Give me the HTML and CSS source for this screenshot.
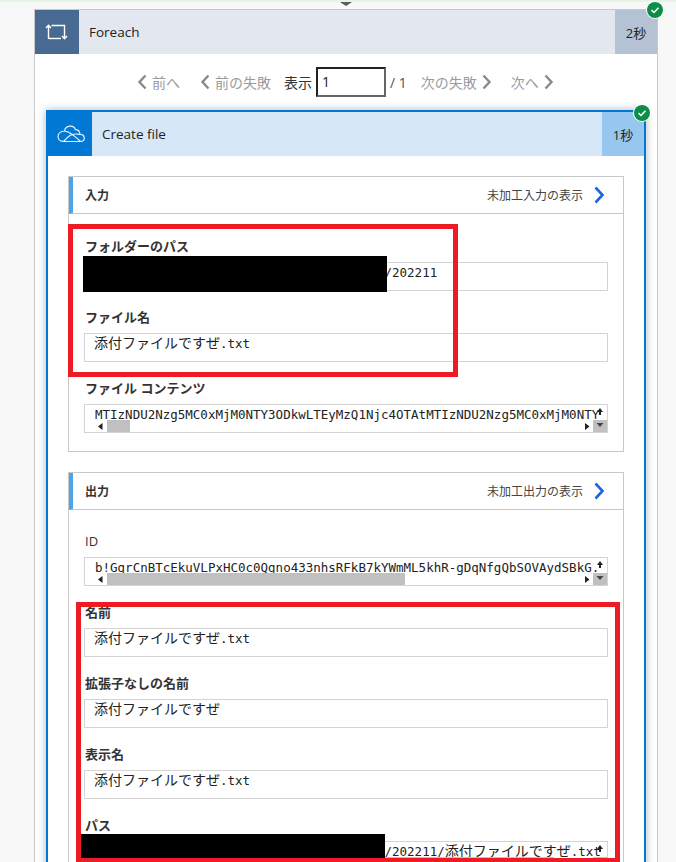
FILE: index.html
```html
<!DOCTYPE html>
<html lang="ja">
<head>
<meta charset="utf-8">
<title>Foreach</title>
<link rel="stylesheet" href="styles.css">
</head>
<body>
<div class="strip"></div>
<svg class="flow-arrow" width="14" height="5" viewBox="0 0 14 5"><path d="M1 0 L7 4 L13 0 L9 0 L7 1.4 L5 0 Z" fill="#555"/><path d="M5 0 L7 2 L9 0 Z" fill="#555"/></svg>
<main class="card loop">
  <header class="head loop-head">
    <div class="ico loop-ico">
      <svg width="24" height="18" viewBox="0 0 24 18" fill="none" stroke="#fff" stroke-width="1.4"><path d="M3.5 16V2.5M1 5L3.5 2.2L6 5"/><path d="M6.5 2.5H19.5V15.5M17 13L19.5 15.8L22 13"/><path d="M3.5 15.5H16"/></svg>
    </div>
    <div class="title">Foreach</div>
    <div class="time loop-time">2秒</div>
    <svg class="badge badge-outer" width="18" height="18" viewBox="0 0 18 18"><circle cx="9" cy="9" r="9" fill="#fff"/><circle cx="9" cy="9" r="8" fill="#0a8f46"/><path d="M5.5 9.2L8 11.5L12.5 6.8" fill="none" stroke="#fff" stroke-width="1.6"/></svg>
  </header>
  <nav class="pager">
    <svg class="chev" width="10" height="16" viewBox="0 0 10 16"><path d="M8.5 1.5L2.5 8L8.5 14.5"/></svg>
    <span class="muted gap-s">前へ</span>
    <svg class="chev gap-l" width="10" height="16" viewBox="0 0 10 16"><path d="M8.5 1.5L2.5 8L8.5 14.5"/></svg>
    <span class="muted gap-s">前の失敗</span>
    <span class="show">表示</span>
    <div class="page-input">1</div>
    <span class="total">/ 1</span>
    <span class="muted next-fail">次の失敗</span>
    <svg class="chev gap-s" width="10" height="16" viewBox="0 0 10 16"><path d="M1.5 1.5L7.5 8L1.5 14.5"/></svg>
    <span class="muted gap-next">次へ</span>
    <svg class="chev gap-s" width="10" height="16" viewBox="0 0 10 16"><path d="M1.5 1.5L7.5 8L1.5 14.5"/></svg>
  </nav>
  <section class="card action">
    <header class="head action-head">
      <div class="ico action-ico">
        <svg width="28" height="18" viewBox="0 0 28 18" fill="none" stroke="#e8f3fc" stroke-width="1.2"><path d="M6.5 16.5H23.5C26.5 16.5 27.5 14.5 27.2 12.6C26.9 10.6 25.3 9.3 23 9.4C22.6 6 20.5 4.6 18.5 4.7C17.8 2.5 15.5 1 12.8 1.2C10 1.4 8 3.3 7.5 6C3.8 6.3 1 8.6 1 11.6C1 14.5 3.5 16.5 6.5 16.5Z"/><path d="M7.5 6C11 6.3 13.5 8 16 10C18 11.6 20.5 13.5 23.5 16.5M23 9.4C18 8.4 15.5 9 13 10.5C10.5 12 8.5 14.2 6.5 16.5"/></svg>
      </div>
      <div class="title">Create file</div>
      <div class="time action-time">1秒</div>
      <svg class="badge badge-inner" width="18" height="18" viewBox="0 0 18 18"><circle cx="9" cy="9" r="9" fill="#fff"/><circle cx="9" cy="9" r="8" fill="#0a8f46"/><path d="M5.5 9.2L8 11.5L12.5 6.8" fill="none" stroke="#fff" stroke-width="1.6"/></svg>
    </header>
    <div class="action-body">
      <section class="panel">
        <header class="panel-head">
          <span class="panel-title">入力</span>
          <span class="raw">未加工入力の表示</span>
          <svg class="blue-chev" width="12" height="18" viewBox="0 0 12 18"><path d="M2.5 1.5L9.5 9L2.5 16.5"/></svg>
        </header>
        <div class="panel-body">
          <div class="field">
            <div class="label">フォルダーのパス</div>
            <div class="box box-mono"><span class="redacted"></span><span class="mono">/202211</span></div>
          </div>
          <div class="field">
            <div class="label">ファイル名</div>
            <div class="box"><span class="jp">添付ファイルですぜ</span><span class="mono">.txt</span></div>
          </div>
          <div class="field">
            <div class="label">ファイル コンテンツ</div>
            <div class="box box-mono">
              <span class="mono">MTIzNDU2Nzg5MC0xMjM0NTY3ODkwLTEyMzQ1Njc4OTAtMTIzNDU2Nzg5MC0xMjM0NTY</span>
              <div class="vbar"><svg width="14" height="8" viewBox="0 0 14 8"><path d="M7 0L10 4H8V7H6V4H4Z" fill="#222"/></svg><div class="vthumb"><svg width="14" height="5" viewBox="0 0 14 5"><path d="M3.5 0H10.5L7 4Z" fill="#444"/></svg></div></div>
              <div class="hbar"><svg class="arr" width="5" height="7" viewBox="0 0 5 7"><path d="M4.5 0V7L0 3.5Z" fill="#222"/></svg><div class="track"><div class="thumb thumb-short"></div></div><svg class="arr" width="5" height="7" viewBox="0 0 5 7"><path d="M0 0V7L4.5 3.5Z" fill="#222"/></svg></div>
            </div>
          </div>
        </div>
      </section>
      <section class="panel panel-output">
        <header class="panel-head">
          <span class="panel-title">出力</span>
          <span class="raw">未加工出力の表示</span>
          <svg class="blue-chev" width="12" height="18" viewBox="0 0 12 18"><path d="M2.5 1.5L9.5 9L2.5 16.5"/></svg>
        </header>
        <div class="panel-body">
          <div class="field">
            <div class="label label-plain">ID</div>
            <div class="box box-mono">
              <span class="mono">b!GgrCnBTcEkuVLPxHC0c0Qgno433nhsRFkB7kYWmML5khR-gDqNfgQbSOVAydSBkG.</span>
              <div class="vbar"><svg width="14" height="8" viewBox="0 0 14 8"><path d="M7 0L10 4H8V7H6V4H4Z" fill="#222"/></svg><div class="vthumb"><svg width="14" height="5" viewBox="0 0 14 5"><path d="M3.5 0H10.5L7 4Z" fill="#444"/></svg></div></div>
              <div class="hbar"><svg class="arr" width="5" height="7" viewBox="0 0 5 7"><path d="M4.5 0V7L0 3.5Z" fill="#222"/></svg><div class="track"><div class="thumb thumb-long"></div></div><svg class="arr" width="5" height="7" viewBox="0 0 5 7"><path d="M0 0V7L4.5 3.5Z" fill="#222"/></svg></div>
            </div>
          </div>
          <div class="field">
            <div class="label">名前</div>
            <div class="box"><span class="jp">添付ファイルですぜ</span><span class="mono">.txt</span></div>
          </div>
          <div class="field">
            <div class="label">拡張子なしの名前</div>
            <div class="box"><span class="jp">添付ファイルですぜ</span></div>
          </div>
          <div class="field">
            <div class="label">表示名</div>
            <div class="box"><span class="jp">添付ファイルですぜ</span><span class="mono">.txt</span></div>
          </div>
          <div class="field">
            <div class="label">パス</div>
            <div class="box">
              <span class="redacted"></span><span class="mono">/202211/</span><span class="jp">添付ファイルですぜ</span><span class="mono">.txt</span>
              <div class="vbar"><svg width="14" height="8" viewBox="0 0 14 8"><path d="M7 0L10 4H8V7H6V4H4Z" fill="#222"/></svg><div class="vthumb"></div></div>
              <div class="hbar"><svg class="arr" width="5" height="7" viewBox="0 0 5 7"><path d="M4.5 0V7L0 3.5Z" fill="#222"/></svg><div class="track"><div class="thumb thumb-path"></div></div><svg class="arr" width="5" height="7" viewBox="0 0 5 7"><path d="M0 0V7L4.5 3.5Z" fill="#222"/></svg></div>
            </div>
          </div>
        </div>
      </section>
    </div>
  </section>
</main>
<div class="mask mask-a"></div>
<div class="mask mask-b"></div>
<div class="red red-a"></div>
<div class="red red-b"></div>
</body>
</html>
```
FILE: styles.css
```css
* { box-sizing: border-box; }
html, body { margin: 0; padding: 0; }
body {
  position: relative;
  width: 676px;
  height: 862px;
  overflow: hidden;
  background: #f8f8f8;
  font-family: "Open Sans", "Noto Sans CJK JP", sans-serif;
  color: #333;
  font-size: 14px;
}
.strip { height: 2px; background: #e6f4e6; }
.flow-arrow { position: absolute; left: 339px; top: 2px; }
.card { background: #fff; }
.loop {
  margin: 7px 18px 0 34px;
  border: 1px solid #c8c8c8;
  height: 860px;
}
.head { position: relative; display: flex; align-items: center; height: 44px; }
.loop-head { background: #e2e7f0; }
.action-head { background: #d6e8f7; }
.ico { display: flex; align-items: center; justify-content: center; height: 44px; }
.loop-ico { width: 44px; background: #486991; }
.action-ico { width: 46px; margin-left: -2px; padding-left: 3px; background: #0078d4; }
.title { flex: 1; font-size: 13.5px; color: #222; padding-left: 10px; }
.time { display: flex; align-items: center; justify-content: center; width: 42px; height: 44px; font-size: 13px; color: #222; }
.loop-time { background: #b5c2d3; }
.action-time { background: #97c6ee; }
.badge { position: absolute; }
.badge-outer { right: -7px; top: -9px; }
.badge-inner { right: -7px; top: -8px; }
.pager { display: flex; align-items: center; height: 56px; padding-left: 102px; }
.chev { fill: none; stroke: #8a8a8a; stroke-width: 2.4; }
.muted { color: #9a9a9a; font-size: 14px; }
.gap-s { margin-left: 5px; }
.gap-l { margin-left: 20px; }
.gap-next { margin-left: 19px; }
.show { margin-left: 13px; color: #333; font-size: 14px; }
.page-input {
  width: 70px;
  height: 30px;
  margin-left: 4px;
  padding: 3px 4px;
  border: 2px solid #222;
  border-right-color: #666;
  border-bottom-color: #666;
  font-size: 14px;
  line-height: 20px;
  color: #222;
}
.total { margin-left: 4px; color: #555; font-size: 14px; }
.next-fail { margin-left: 14px; }
.action {
  margin: 0 11px;
  border: 2px solid #0078d4;
  height: 760px;
  box-shadow: 0 0 8px rgba(0, 0, 0, 0.3);
}
.action-body { padding: 20px 20px 0 20px; }
.panel { border: 1px solid #c8c8c8; margin-bottom: 20px; }
.panel-head {
  display: flex;
  align-items: center;
  height: 37px;
  padding-right: 18px;
  border-left: 4px solid #4fa3e6;
  border-bottom: 1px solid #c8c8c8;
}
.panel-title { flex: 1; padding-left: 12px; font-size: 12px; font-weight: 700; color: #333; }
.raw { font-size: 12px; color: #444; margin-right: 10px; }
.blue-chev { fill: none; stroke: #1a66e0; stroke-width: 2.6; }
.panel-body { padding: 22px 15px 2px 15px; }
.panel-output .panel-body { padding-top: 21px; }
.field { margin-bottom: 16px; }
.label { height: 20px; line-height: 20px; margin-bottom: 6px; padding-left: 1px; font-size: 13px; font-weight: 700; color: #333; }
.label-plain { font-weight: 400; }
.box {
  position: relative;
  height: 29px;
  padding: 0 10px;
  border: 1px solid #d4d4d4;
  background: #fff;
  white-space: nowrap;
  overflow: hidden;
  line-height: 16px;
  color: #222;
}
.box-mono { padding-top: 1px; }
.redacted { display: inline-block; width: 289.5px; }
.mono { font-family: "DejaVu Sans Mono", monospace; font-size: 12.5px; }
.jp { font-family: "Noto Sans CJK JP", sans-serif; font-size: 14px; }
.jp:first-child { margin-left: -1px; }
.vbar { position: absolute; right: 0; top: 0; bottom: 0; width: 14px; display: flex; flex-direction: column; padding-top: 3px; }
.vthumb { margin-top: auto; height: 12px; background: #c0c0c0; padding-top: 3px; display: flex; }
.hbar { position: absolute; left: 0; right: 14px; bottom: 0; height: 12px; display: flex; align-items: center; padding: 0 3px 0 13px; }
.track { flex: 1; height: 12px; margin: 0 4px; }
.thumb { height: 12px; background: #c0c0c0; }
.thumb-short { width: 23px; }
.thumb-long { width: 298px; }
.thumb-path { width: 447px; }
.mask { position: absolute; background: #000; }
.mask-a { left: 83px; top: 256px; width: 304px; height: 36px; }
.mask-b { left: 81px; top: 834px; width: 304px; height: 28px; }
.red { position: absolute; border: 5px solid #ed1c24; }
.red-a { left: 68px; top: 224px; width: 390px; height: 153px; }
.red-b { left: 76px; top: 602px; width: 544px; height: 261px; }
```
